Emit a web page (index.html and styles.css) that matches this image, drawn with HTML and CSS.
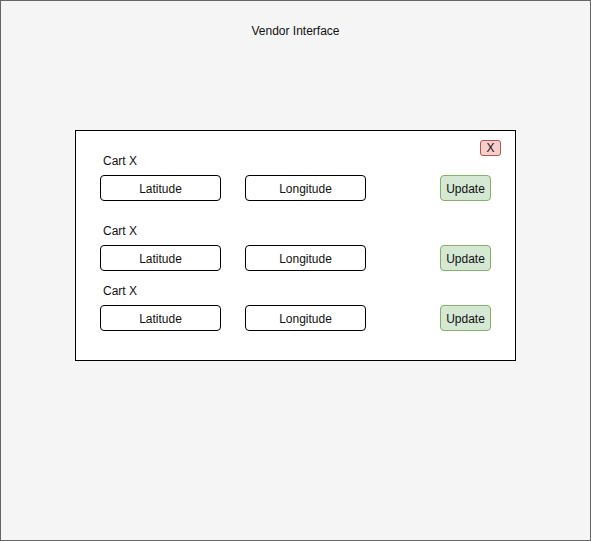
FILE: index.html
```html
<!DOCTYPE html>
<html lang="en">
<head>
<meta charset="utf-8">
<title>Vendor Interface</title>
<link rel="stylesheet" href="styles.css">
</head>
<body>
<main class="page">
  <h1 class="title">Vendor Interface</h1>
  <section class="panel">
    <button class="close" type="button" aria-label="Close">X</button>
    <form class="cart cart-spaced">
      <h2 class="cart-name">Cart X</h2>
      <div class="row">
        <input class="field" type="text" placeholder="Latitude" aria-label="Latitude">
        <input class="field" type="text" placeholder="Longitude" aria-label="Longitude">
        <button class="update" type="button">Update</button>
      </div>
    </form>
    <form class="cart">
      <h2 class="cart-name">Cart X</h2>
      <div class="row">
        <input class="field" type="text" placeholder="Latitude" aria-label="Latitude">
        <input class="field" type="text" placeholder="Longitude" aria-label="Longitude">
        <button class="update" type="button">Update</button>
      </div>
    </form>
    <form class="cart">
      <h2 class="cart-name">Cart X</h2>
      <div class="row">
        <input class="field" type="text" placeholder="Latitude" aria-label="Latitude">
        <input class="field" type="text" placeholder="Longitude" aria-label="Longitude">
        <button class="update" type="button">Update</button>
      </div>
    </form>
  </section>
</main>
</body>
</html>
```
FILE: styles.css
```css
* {
  box-sizing: border-box;
}

body {
  margin: 0;
  font: 12px/14px "Liberation Sans", Arial, sans-serif;
  color: #111;
}

button,
input {
  margin: 0;
  padding: 2px 0 0;
  font: inherit;
  color: inherit;
  text-align: center;
}

.page {
  min-height: 100vh;
  padding: 23px 74px;
  border: 1px solid #666;
  background: #f5f5f5;
}

.title {
  margin: 0 0 92px;
  font-size: 12px;
  font-weight: normal;
  text-align: center;
}

.panel {
  position: relative;
  padding: 23px 24px 29px;
  border: 1px solid #000;
  background: #fff;
}

.close {
  position: absolute;
  top: 9px;
  right: 14px;
  width: 21px;
  height: 16px;
  padding: 0;
  border: 1px solid #b85450;
  border-radius: 3px;
  background: #f8cecc;
}

.cart + .cart {
  margin-top: 13px;
}

.cart-spaced + .cart {
  margin-top: 23px;
}

.cart-name {
  margin: 0 0 7px 3px;
  font-size: 12px;
  font-weight: normal;
}

.row {
  display: flex;
  gap: 24px;
}

.field {
  flex: 0 1 121px;
  min-width: 0;
  height: 26px;
  border: 1px solid #000;
  border-radius: 4px;
  background: #fff;
}

.field::placeholder {
  color: inherit;
  opacity: 1;
}

.update {
  width: 51px;
  height: 26px;
  margin-left: auto;
  border: 1px solid #82b366;
  border-radius: 4px;
  background: #d5e8d4;
}
```
